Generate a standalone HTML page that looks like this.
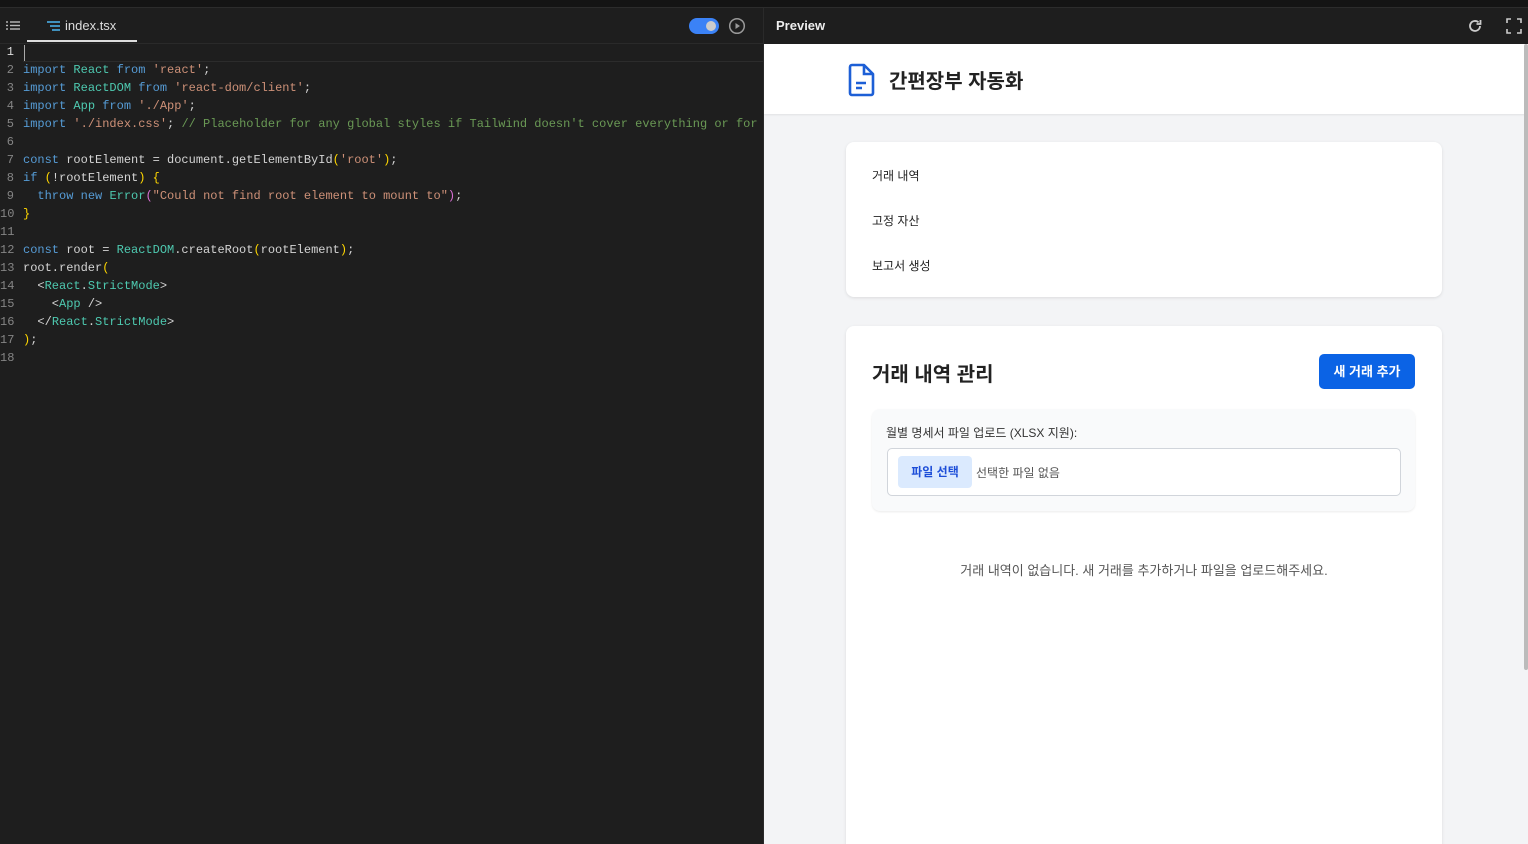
<!DOCTYPE html>
<html><head><meta charset="utf-8"><style>
*{margin:0;padding:0;box-sizing:border-box}
body{width:1528px;height:844px;overflow:hidden;background:#1e1e1e;font-family:"Liberation Sans","Noto Sans CJK KR",sans-serif;position:relative}
.top{position:absolute;left:0;top:0;width:1528px;height:8px;background:#141414;border-bottom:1px solid #2c2c2c}
.ed{position:absolute;left:0;top:8px;width:764px;height:836px;background:#1e1e1e;border-right:1px solid #2a2a2a}
.tabs{height:36px;border-bottom:1px solid #2a2a2a;position:relative}
.code{position:absolute;top:35px;left:0;font-family:"Liberation Mono",monospace;font-size:12px;color:#d4d4d4;white-space:pre}
.ln{position:absolute;left:0;width:14px;text-align:right;color:#858585}
.l{position:absolute;left:23px;height:18px;line-height:18px}
.k{color:#569cd6}.t{color:#4ec9b0}.s{color:#ce9178}.c{color:#6a9955}.y{color:#ffd700}.p{color:#da70d6}
.pv{position:absolute;left:764px;top:8px;width:764px;height:836px;background:#f3f4f6;overflow:hidden}
.ph{height:36px;background:#1e1e1e;color:#eee;font-size:13px;font-weight:bold;padding:10px 12px}
.hd{height:70px;background:#fff;box-shadow:0 1px 2px rgba(0,0,0,.08);position:relative}
.card{position:absolute;background:#fff;border-radius:8px;box-shadow:0 1px 3px rgba(0,0,0,.1)}
</style></head><body>
<div class="top"></div>
<div class="ed">
 <div class="tabs">
  <svg style="position:absolute;left:6px;top:12px" width="14" height="11"><g stroke="#bbb" stroke-width="1.4"><line x1="0" y1="2" x2="2" y2="2"/><line x1="4" y1="2" x2="14" y2="2"/><line x1="0" y1="5.5" x2="2" y2="5.5"/><line x1="4" y1="5.5" x2="14" y2="5.5"/><line x1="0" y1="9" x2="2" y2="9"/><line x1="4" y1="9" x2="14" y2="9"/></g></svg>
  <svg style="position:absolute;left:47px;top:13px" width="13" height="10"><g stroke="#4fc1ff" stroke-width="1.4"><line x1="0" y1="1" x2="13" y2="1"/><line x1="3" y1="5" x2="13" y2="5"/><line x1="5" y1="9" x2="13" y2="9"/></g></svg>
  <div style="position:absolute;left:65px;top:10px;color:#ddd;font-size:13px">index.tsx</div>
  <div style="position:absolute;left:27px;top:32px;width:110px;height:2px;background:#ddd"></div>
  <div style="position:absolute;left:689px;top:10px;width:30px;height:16px;border-radius:8px;background:#3b82f6"><div style="position:absolute;right:3px;top:3px;width:10px;height:10px;border-radius:50%;background:#ccc"></div></div>
  <svg style="position:absolute;left:728px;top:9px" width="18" height="18"><circle cx="9" cy="9" r="7.3" fill="none" stroke="#999" stroke-width="1.5"/><path d="M7.5 6v6l4.5-3z" fill="#999"/></svg>
 </div>
 <div style="position:absolute;top:36px;left:23px;right:0;height:18px;border-bottom:1px solid #2c2c2c"></div>
 <div style="position:absolute;top:37px;left:24px;width:1px;height:16px;background:#aaa"></div>
 <div class="code">
<div class="ln" style="top:0;color:#ddd;line-height:18px">1</div>
<div class="ln" style="top:18px;line-height:18px">2</div><div class="ln" style="top:36px;line-height:18px">3</div><div class="ln" style="top:54px;line-height:18px">4</div><div class="ln" style="top:72px;line-height:18px">5</div><div class="ln" style="top:90px;line-height:18px">6</div><div class="ln" style="top:108px;line-height:18px">7</div><div class="ln" style="top:126px;line-height:18px">8</div><div class="ln" style="top:144px;line-height:18px">9</div><div class="ln" style="top:162px;line-height:18px">10</div><div class="ln" style="top:180px;line-height:18px">11</div><div class="ln" style="top:198px;line-height:18px">12</div><div class="ln" style="top:216px;line-height:18px">13</div><div class="ln" style="top:234px;line-height:18px">14</div><div class="ln" style="top:252px;line-height:18px">15</div><div class="ln" style="top:270px;line-height:18px">16</div><div class="ln" style="top:288px;line-height:18px">17</div><div class="ln" style="top:306px;line-height:18px">18</div>
<div class="l" style="top:18px"><span class="k">import</span> <span class="t">React</span> <span class="k">from</span> <span class="s">'react'</span>;</div>
<div class="l" style="top:36px"><span class="k">import</span> <span class="t">ReactDOM</span> <span class="k">from</span> <span class="s">'react-dom/client'</span>;</div>
<div class="l" style="top:54px"><span class="k">import</span> <span class="t">App</span> <span class="k">from</span> <span class="s">'./App'</span>;</div>
<div class="l" style="top:72px"><span class="k">import</span> <span class="s">'./index.css'</span>; <span class="c">// Placeholder for any global styles if Tailwind doesn't cover everything or for</span></div>
<div class="l" style="top:108px"><span class="k">const</span> rootElement = document.getElementById<span class="y">(</span><span class="s">'root'</span><span class="y">)</span>;</div>
<div class="l" style="top:126px"><span class="k">if</span> <span class="y">(</span>!rootElement<span class="y">)</span> <span class="y">{</span></div>
<div class="l" style="top:144px">  <span class="k">throw</span> <span class="k">new</span> <span class="t">Error</span><span class="p">(</span><span class="s">"Could not find root element to mount to"</span><span class="p">)</span>;</div>
<div class="l" style="top:162px"><span class="y">}</span></div>
<div class="l" style="top:198px"><span class="k">const</span> root = <span class="t">ReactDOM</span>.createRoot<span class="y">(</span>rootElement<span class="y">)</span>;</div>
<div class="l" style="top:216px">root.render<span class="y">(</span></div>
<div class="l" style="top:234px">  &lt;<span class="t">React</span>.<span class="t">StrictMode</span>&gt;</div>
<div class="l" style="top:252px">    &lt;<span class="t">App</span> /&gt;</div>
<div class="l" style="top:270px">  &lt;/<span class="t">React</span>.<span class="t">StrictMode</span>&gt;</div>
<div class="l" style="top:288px"><span class="y">)</span>;</div>
 </div>
</div>
<div class="pv">
 <div class="ph">Preview
  <svg style="position:absolute;right:45px;top:10px" width="16" height="16"><path d="M13 8a5 5 0 1 1-1.5-3.6" fill="none" stroke="#ccc" stroke-width="1.8"/><path d="M13.5 2v4h-4" fill="none" stroke="#ccc" stroke-width="1.8"/></svg>
  <svg style="position:absolute;right:6px;top:10px" width="16" height="16"><path d="M1 5V1h4M11 1h4v4M15 11v4h-4M5 15H1v-4" fill="none" stroke="#ccc" stroke-width="1.6"/></svg>
 </div>
 <div class="hd">
  <svg style="position:absolute;left:84px;top:19px" width="28" height="34" viewBox="0 0 28 34"><path d="M4 2h12l9 9v19a2 2 0 0 1-2 2H4a2 2 0 0 1-2-2V4a2 2 0 0 1 2-2z" fill="none" stroke="#1d5fd6" stroke-width="2.6" stroke-linejoin="round"/><path d="M16 2v9h9" fill="none" stroke="#1d5fd6" stroke-width="2.6"/><path d="M8 20h10M8 25h6" stroke="#1d5fd6" stroke-width="2.4"/></svg>
  <div style="position:absolute;left:125px;top:21px;font-size:20px;font-weight:bold;color:#222">간편장부 자동화</div>
 </div>
 <div class="card" style="left:82px;top:134px;width:596px;height:155px;font-size:12px;color:#222">
  <div style="position:absolute;left:26px;top:25px">거래 내역</div>
  <div style="position:absolute;left:26px;top:70px">고정 자산</div>
  <div style="position:absolute;left:26px;top:115px">보고서 생성</div>
 </div>
 <div class="card" style="left:82px;top:318px;width:596px;height:540px">
  <div style="position:absolute;left:26px;top:32px;font-size:20px;font-weight:bold;color:#222">거래 내역 관리</div>
  <div style="position:absolute;left:473px;top:28px;width:96px;height:35px;background:#0b63e5;border-radius:5px;color:#fff;font-size:13px;font-weight:bold;text-align:center;line-height:35px">새 거래 추가</div>
  <div style="position:absolute;left:26px;top:83px;width:543px;height:102px;background:#f9fafb;border-radius:8px;box-shadow:0 1px 2px rgba(0,0,0,.08)">
   <div style="position:absolute;left:14px;top:15px;font-size:12px;color:#333">월별 명세서 파일 업로드 (XLSX 지원):</div>
   <div style="position:absolute;left:15px;top:39px;width:514px;height:48px;background:#fff;border:1px solid #d1d5db;border-radius:5px">
    <div style="position:absolute;left:10px;top:7px;width:74px;height:32px;background:#dbeafe;border-radius:4px;color:#1d4ed8;font-size:12px;font-weight:bold;text-align:center;line-height:32px">파일 선택</div>
    <div style="position:absolute;left:88px;top:15px;font-size:12px;color:#555">선택한 파일 없음</div>
   </div>
  </div>
  <div style="position:absolute;left:0;width:596px;top:234px;text-align:center;font-size:13px;color:#555">거래 내역이 없습니다. 새 거래를 추가하거나 파일을 업로드해주세요.</div>
 </div>
 <div style="position:absolute;right:0;top:36px;width:4px;height:626px;background:#bbb;border-radius:2px"></div>
</div>
</body></html>
